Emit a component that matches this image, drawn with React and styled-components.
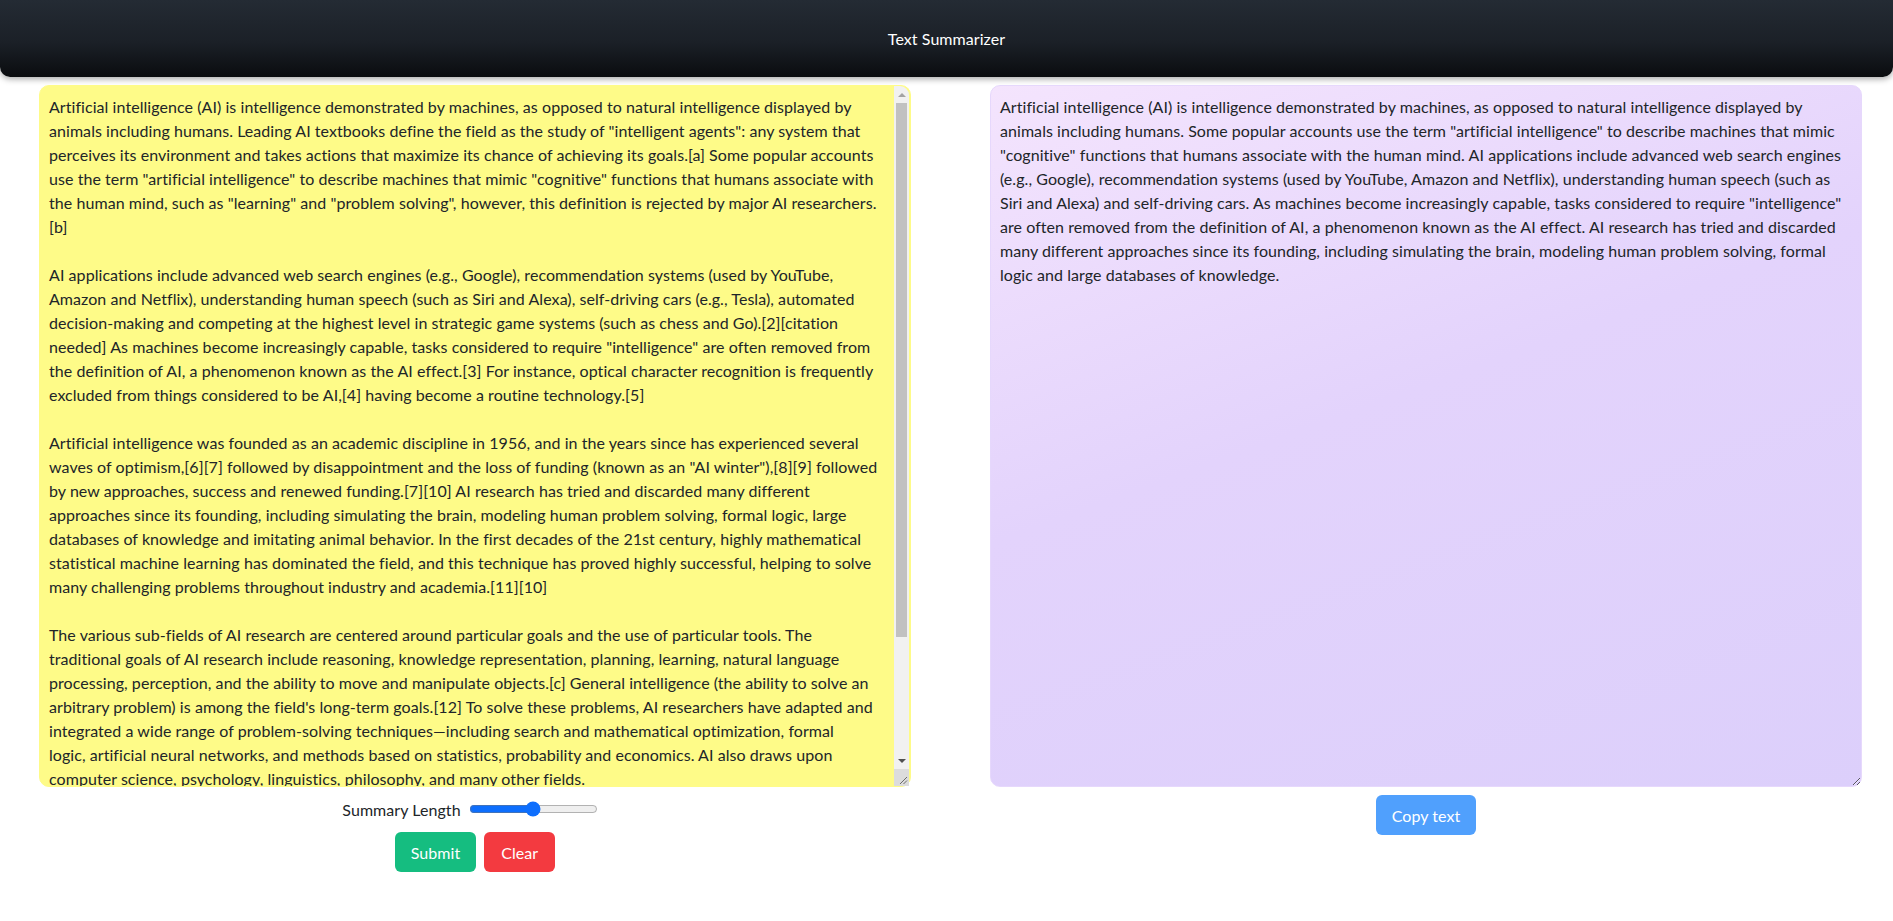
import React from 'react';
import styled, { createGlobalStyle } from 'styled-components';

const GlobalStyle = createGlobalStyle`
    body {
        margin: 0;
        background: #ffffff;
        font-family: Lato, "Liberation Sans", sans-serif;
        letter-spacing: 0.06px;
        color: #212529;
    }
    * {
        box-sizing: border-box;
    }
`;

const Header = styled.header`
    height: 77px;
    display: flex;
    align-items: center;
    justify-content: center;
    background: linear-gradient(180deg, #242b34 0%, #1b2027 55%, #0a0c0f 100%);
    border-radius: 0 0 10px 10px;
    box-shadow: 0 2px 6px rgba(0, 0, 0, 0.35);
    color: #ffffff;
    font-size: 16px;
`;

const Main = styled.main`
    display: grid;
    grid-template-columns: 1fr 1fr;
    column-gap: 79px;
    padding: 8px 31px 0 39px;
`;

const Column = styled.section`
    display: flex;
    flex-direction: column;
    align-items: center;
`;

const Field = styled.div`
    position: relative;
    width: 100%;
`;

const TextBox = styled.textarea`
    display: block;
    width: 100%;
    height: 702px;
    padding: 9px ${p => (p.$summary ? '10px' : '26px')} 9px 9px;
    border: 1px solid ${p => (p.$summary ? '#e6d8fc' : '#fefb88')};
    border-radius: 10px;
    background: ${p => (p.$summary
        ? 'linear-gradient(160deg, #f4e4fd 0%, #e3d3fc 45%, #dccffb 100%)'
        : '#fefb88')};
    font-family: Lato, "Liberation Sans", sans-serif;
    font-size: 16px;
    line-height: 24px;
    letter-spacing: 0.06px;
    color: #212529;
    outline: none;
    overflow: hidden;
`;

// scrollbar of the source box, drawn over its right edge
const ScrollRail = styled.div`
    position: absolute;
    top: 1px;
    right: 2px;
    bottom: 1px;
    width: 15px;
    display: flex;
    flex-direction: column;
    background: #f1f1f1;
    border-top-right-radius: 9px;
    overflow: hidden;
`;

const ArrowButton = styled.div`
    height: 17px;
    display: flex;
    align-items: center;
    justify-content: center;
`;

const Triangle = styled.span`
    width: 0;
    height: 0;
    border-left: 4px solid transparent;
    border-right: 4px solid transparent;
    ${p => (p.$down
        ? 'border-top: 4px solid #505050;'
        : 'border-bottom: 4px solid #a3a3a3;')}
`;

const Track = styled.div`
    flex: 1;
    padding: 0 2px;
`;

const Thumb = styled.div`
    height: 534px;
    background: #c1c1c1;
`;

const Grip = styled.div`
    height: 17px;
    display: flex;
    align-items: flex-end;
    justify-content: flex-end;
    padding: 0 1px 1px 0;
    background: #dcdcdc;
`;

const LengthRow = styled.div`
    display: flex;
    align-items: center;
    gap: 8px;
    margin-top: 10px;
    padding-right: 10px;
    height: 24px;
    font-size: 16px;
`;

const Slider = styled.input`
    width: 129px;
    margin: 0;
    accent-color: #0d6efd;
`;

const ButtonRow = styled.div`
    display: flex;
    gap: 8px;
    margin-top: ${p => p.$top || '11px'};
`;

const Button = styled.button`
    height: 40px;
    padding: 0 ${p => p.$pad || '16px'};
    border: none;
    border-radius: 6px;
    background: ${p => p.$color};
    color: #ffffff;
    font-family: Lato, "Liberation Sans", sans-serif;
    font-size: 16px;
    letter-spacing: 0.06px;
    cursor: pointer;
`;

const source = `Artificial intelligence (AI) is intelligence demonstrated by machines, as opposed to natural intelligence displayed by animals including humans. Leading AI textbooks define the field as the study of "intelligent agents": any system that perceives its environment and takes actions that maximize its chance of achieving its goals.[a] Some popular accounts use the term "artificial intelligence" to describe machines that mimic "cognitive" functions that humans associate with the human mind, such as "learning" and "problem solving", however, this definition is rejected by major AI researchers.[b]

AI applications include advanced web search engines (e.g., Google), recommendation systems (used by YouTube, Amazon and Netflix), understanding human speech (such as Siri and Alexa), self-driving cars (e.g., Tesla), automated decision-making and competing at the highest level in strategic game systems (such as chess and Go).[2][citation needed] As machines become increasingly capable, tasks considered to require "intelligence" are often removed from the definition of AI, a phenomenon known as the AI effect.[3] For instance, optical character recognition is frequently excluded from things considered to be AI,[4] having become a routine technology.[5]

Artificial intelligence was founded as an academic discipline in 1956, and in the years since has experienced several waves of optimism,[6][7] followed by disappointment and the loss of funding (known as an "AI winter"),[8][9] followed by new approaches, success and renewed funding.[7][10] AI research has tried and discarded many different approaches since its founding, including simulating the brain, modeling human problem solving, formal logic, large databases of knowledge and imitating animal behavior. In the first decades of the 21st century, highly mathematical statistical machine learning has dominated the field, and this technique has proved highly successful, helping to solve many challenging problems throughout industry and academia.[11][10]

The various sub-fields of AI research are centered around particular goals and the use of particular tools. The traditional goals of AI research include reasoning, knowledge representation, planning, learning, natural language processing, perception, and the ability to move and manipulate objects.[c] General intelligence (the ability to solve an arbitrary problem) is among the field's long-term goals.[12] To solve these problems, AI researchers have adapted and integrated a wide range of problem-solving techniques—including search and mathematical optimization, formal
logic, artificial neural networks, and methods based on statistics, probability and economics. AI also draws upon computer science, psychology, linguistics, philosophy, and many other fields.

The field was founded on the assumption that human intelligence "can be so precisely described that a machine can be made to simulate it".[d] This raised philosophical arguments about the mind and the ethical consequences of creating artificial beings endowed with human-like intelligence; these issues have previously been explored by myth, fiction and philosophy since antiquity.[13]`;

const summary = `Artificial intelligence (AI) is intelligence demonstrated by machines, as opposed to natural intelligence displayed by animals including humans. Some popular accounts use the term "artificial intelligence" to describe machines that mimic "cognitive" functions that humans associate with the human mind. AI applications include advanced web search engines (e.g., Google), recommendation systems (used by YouTube, Amazon and Netflix), understanding human speech (such as Siri and Alexa) and self-driving cars. As machines become increasingly capable, tasks considered to require "intelligence" are often removed from the definition of AI, a phenomenon known as the AI effect. AI research has tried and discarded many different approaches since its founding, including simulating the brain, modeling human problem solving, formal logic and large databases of knowledge.`;

export default function App() {
    return (
        <>
            <GlobalStyle />
            <Header>Text Summarizer</Header>
            <Main>
                <Column>
                    <Field>
                        <TextBox defaultValue={source} spellCheck={false} />
                        <ScrollRail>
                            <ArrowButton><Triangle /></ArrowButton>
                            <Track><Thumb /></Track>
                            <ArrowButton><Triangle $down /></ArrowButton>
                            <Grip>
                                <svg width="9" height="9" viewBox="0 0 9 9">
                                    <path d="M1 8 L8 1 M4.5 8 L8 4.5" stroke="#6b6b6b" strokeWidth="1" />
                                </svg>
                            </Grip>
                        </ScrollRail>
                    </Field>
                    <LengthRow>
                        <label htmlFor="length">Summary Length</label>
                        <Slider id="length" type="range" min="0" max="100" defaultValue="50" />
                    </LengthRow>
                    <ButtonRow>
                        <Button $color="#15bd80">Submit</Button>
                        <Button $color="#f33a40" $pad="17px">Clear</Button>
                    </ButtonRow>
                </Column>
                <Column>
                    <Field>
                        <TextBox $summary readOnly value={summary} spellCheck={false} />
                    </Field>
                    <ButtonRow $top="8px">
                        <Button $color="#50a0fd">Copy text</Button>
                    </ButtonRow>
                </Column>
            </Main>
        </>
    );
}
